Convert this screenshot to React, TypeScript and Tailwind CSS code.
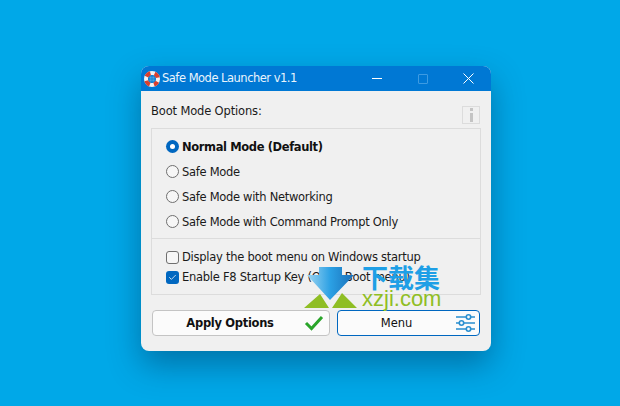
import { Check } from 'lucide-react';

const font = { fontFamily: '"DejaVu Sans", sans-serif' };

function Radio({ label, checked }: { label: string; checked?: boolean }) {
  return (
    <div className="flex h-[25px] items-center">
      {checked ? (
        <span className="flex h-[13px] w-[13px] -translate-y-px items-center justify-center rounded-full bg-[#0067c0]">
          <span className="h-[5px] w-[5px] rounded-full bg-white" />
        </span>
      ) : (
        <span className="h-[13px] w-[13px] -translate-y-px rounded-full border border-[#6f6f6f] bg-[#f6f6f6]" />
      )}
      <span className={`ml-[3px] mt-[2px] text-[11.5px] ${checked ? 'font-bold tracking-[-0.38px] text-[#111]' : 'tracking-[-0.3px] text-[#1a1a1a]'}`}>{label}</span>
    </div>
  );
}

function CheckRow({ label, checked }: { label: string; checked?: boolean }) {
  return (
    <div className="flex h-[20px] items-center">
      {checked ? (
        <span className="flex h-[13px] w-[13px] items-center justify-center rounded-[3px] bg-[#0067c0]">
          <Check size={9} strokeWidth={2} className="text-white" />
        </span>
      ) : (
        <span className="h-[13px] w-[13px] rounded-[3px] border border-[#6f6f6f] bg-[#f6f6f6]" />
      )}
      <span className="ml-[3px] mt-[1px] whitespace-nowrap text-[11.5px] tracking-[-0.26px] text-[#1a1a1a]">{label}</span>
    </div>
  );
}

function LifeRing() {
  return (
    <svg width="16" height="16" viewBox="0 0 16 16">
      <circle cx="8" cy="8" r="6" fill="none" stroke="#f3f3f3" strokeWidth="4" />
      <circle cx="8" cy="8" r="6" fill="none" stroke="#d8402f" strokeWidth="4" strokeDasharray="5.4 4" strokeDashoffset="2.7" transform="rotate(45 8 8)" />
      <rect x="5.5" y="5.5" width="2.2" height="2.2" fill="#4aa3df" />
      <rect x="8.3" y="5.5" width="2.2" height="2.2" fill="#4aa3df" />
      <rect x="5.5" y="8.3" width="2.2" height="2.2" fill="#4aa3df" />
      <rect x="8.3" y="8.3" width="2.2" height="2.2" fill="#4aa3df" />
    </svg>
  );
}

function Sliders() {
  return (
    <svg width="20" height="18" viewBox="0 0 20 18" fill="none" stroke="#2a8fd0" strokeWidth="1.6">
      <path d="M0 3H10M15 3H19M0 9H3M8 9H19M0 15H10M15 15H19" />
      <circle cx="12.5" cy="3" r="2.2" />
      <circle cx="5.5" cy="9" r="2.2" />
      <circle cx="12.5" cy="15" r="2.2" />
    </svg>
  );
}

function Watermark() {
  return (
    <div className="absolute left-[304px] top-[265px] h-[50px] w-[140px]">
      <svg width="54" height="46" viewBox="0 0 54 46" className="absolute left-0 top-0">
        <defs>
          <linearGradient id="arrow" x1="0" x2="1" y1="0" y2="0">
            <stop offset="0" stopColor="#9fd6f2" />
            <stop offset="0.5" stopColor="#2ba0e4" />
            <stop offset="1" stopColor="#1a6fb8" />
          </linearGradient>
        </defs>
        <path d="M0 43L16 29L25 43ZM28 43L38 28L53 43Z" fill="#8fbe24" />
        <path d="M15 2H38V10H50L26 35L3 10H15Z" fill="url(#arrow)" />
      </svg>
      <span className="absolute left-[58px] top-[-3px] whitespace-nowrap text-[26px] font-bold leading-[30px] text-[#1e9fe6]" style={{ fontFamily: '"Noto Sans CJK SC", sans-serif' }}>下载集</span>
      <span className="absolute left-[58px] top-[22px] text-[22px] leading-[24px] text-[#8fbe24]" style={{ fontFamily: '"Liberation Sans", sans-serif' }}>xzji.com</span>
    </div>
  );
}

export default function App() {
  return (
    <div className="relative h-[406px] w-[620px] overflow-hidden bg-[#00a8e8] pl-[141px] pt-[66px]" style={font}>
      <div className="flex h-[285px] w-[350px] flex-col overflow-hidden rounded-[8px] bg-[#f0f0f0] shadow-[0_14px_32px_rgba(0,50,90,0.45)]">
        <div className="flex h-[25px] items-center bg-[#0078d4] pl-[3px] text-white">
          <LifeRing />
          <span className="ml-[2px] flex-1 text-[11.5px] tracking-[-0.5px] text-[#eaf4fc]">Safe Mode Launcher v1.1</span>
          <div className="flex w-[135px] items-center">
            <div className="flex w-[45px] -translate-x-[2px] justify-center"><span className="h-px w-[10px] bg-white" /></div>
            <div className="flex w-[45px] -translate-x-[1px] justify-center"><span className="h-[10px] w-[10px] rounded-[1px] border border-[#3d9be2]" /></div>
            <div className="flex w-[45px] justify-center">
              <svg width="11" height="11" viewBox="0 0 11 11" stroke="#fff" strokeWidth="1"><path d="M0.5 0.5L10.5 10.5M10.5 0.5L0.5 10.5" /></svg>
            </div>
          </div>
        </div>
        <div className="flex flex-1 flex-col px-[10px]">
          <div className="flex h-[37px] items-center justify-between pr-[1px]">
            <span className="mt-[5px] text-[11.5px] tracking-[-0.15px] text-[#1a1a1a]">Boot Mode Options:</span>
            <span className="mt-[10px] flex h-[18px] w-[18px] flex-col items-center justify-center gap-[2px] border border-[#dcdcdc]">
              <span className="h-[3px] w-[3px] bg-[#c4c4c4]" />
              <span className="h-[9px] w-[3px] bg-[#c4c4c4]" />
            </span>
          </div>
          <div className="border border-[#dcdcdc]">
            <div className="flex h-[110px] flex-col justify-center border-b border-[#dcdcdc] pl-[14px] pt-[2px]">
              <Radio label="Normal Mode (Default)" checked />
              <Radio label="Safe Mode" />
              <Radio label="Safe Mode with Networking" />
              <Radio label="Safe Mode with Command Prompt Only" />
            </div>
            <div className="flex h-[55px] flex-col justify-center pt-[1px] pl-[14px]">
              <CheckRow label="Display the boot menu on Windows startup" />
              <CheckRow label="Enable F8 Startup Key (Open Boot menu)" checked />
            </div>
          </div>
          <div className="mt-[15px] flex gap-[7px] pl-px">
            <button className="relative flex h-[26px] w-[178px] items-center justify-center rounded-[4px] border border-[#c4c4c4] bg-[#fbfbfb] pr-[22px] pt-[2px] text-[11.5px] font-bold tracking-[-0.3px] text-[#111]">
              Apply Options
              <svg width="20" height="16" viewBox="0 0 20 16" fill="none" stroke="#2aa52a" strokeWidth="3" className="absolute right-[5px] top-[4px]">
                <path d="M2 8L7.5 13.5L18 2" />
              </svg>
            </button>
            <button className="relative flex h-[26px] w-[143px] items-center justify-center rounded-[4px] border border-[#0067c0] bg-[#fbfbfb] pr-[24px] pt-[2px] text-[11.5px] text-[#111]">
              Menu
              <span className="absolute right-[3px] top-[3px]"><Sliders /></span>
            </button>
          </div>
        </div>
      </div>
      <Watermark />
    </div>
  );
}
